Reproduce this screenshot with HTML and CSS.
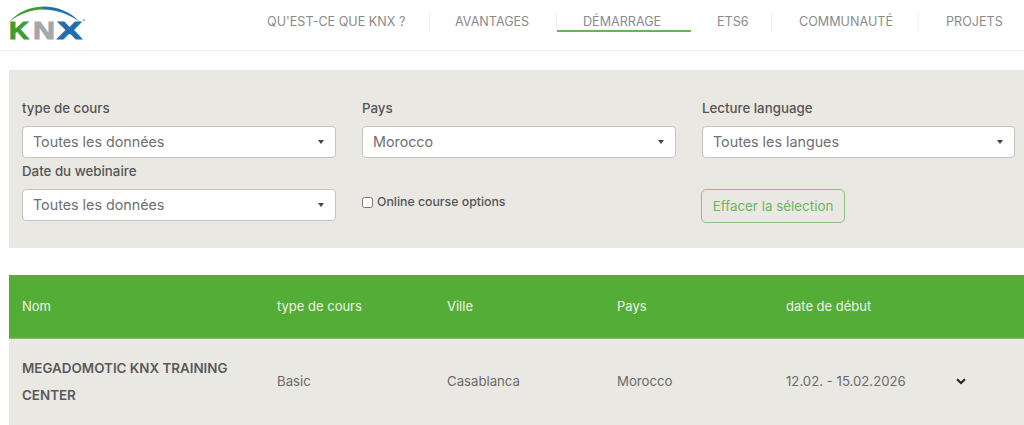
FILE: index.html
```html
<!DOCTYPE html>
<html lang="fr">
<head>
  <meta charset="UTF-8">
  <meta name="viewport" content="width=device-width, initial-scale=1.0">
  <title>KNX - Démarrage</title>
  <link rel="stylesheet" href="styles.css">
</head>
<body>
  <header class="topbar">
    <a class="logo" href="#">
      <svg width="80" height="38" viewBox="0 0 80 38">
        <path d="M1 17 C10 7 21 2 35 1.500 L35 4.500 C22 5 11 9 1 17 Z" fill="#3f9c35"/>
        <path d="M35 1.500 C50 1.500 63 7 73 18 C62 9 49 5 35 4.500 Z" fill="#1f6fae"/>
        <text class="logo-k" x="1" y="34" textLength="20" lengthAdjust="spacingAndGlyphs">K</text>
        <text class="logo-n" x="25" y="34" textLength="22" lengthAdjust="spacingAndGlyphs">N</text>
        <text class="logo-x" x="49" y="34" textLength="25" lengthAdjust="spacingAndGlyphs">X</text>
        <circle cx="76" cy="15" r="1.200" fill="#b5bcc2"/>
      </svg>
    </a>
    <nav class="menu">
      <a class="menu-item item-1" href="#">QU'EST-CE QUE KNX ?</a>
      <a class="menu-item item-2" href="#">AVANTAGES</a>
      <a class="menu-item item-3 active" href="#">DÉMARRAGE</a>
      <a class="menu-item item-4" href="#">ETS6</a>
      <a class="menu-item item-5" href="#">COMMUNAUTÉ</a>
      <a class="menu-item item-6" href="#">PROJETS</a>
    </nav>
  </header>

  <section class="filters">
    <div class="field">
      <label>type de cours</label>
      <div class="select">Toutes les données<span class="caret"></span></div>
    </div>
    <div class="field">
      <label>Pays</label>
      <div class="select">Morocco<span class="caret"></span></div>
    </div>
    <div class="field">
      <label>Lecture language</label>
      <div class="select">Toutes les langues<span class="caret"></span></div>
    </div>
    <div class="field">
      <label>Date du webinaire</label>
      <div class="select">Toutes les données<span class="caret"></span></div>
    </div>
    <div class="field field-check">
      <label class="check"><input type="checkbox">Online course options</label>
    </div>
    <div class="field field-btn">
      <button class="clear">Effacer la sélection</button>
    </div>
  </section>

  <section class="courses">
    <div class="row head">
      <div>Nom</div>
      <div>type de cours</div>
      <div>Ville</div>
      <div>Pays</div>
      <div>date de début</div>
      <div></div>
    </div>
    <div class="row body-row">
      <div class="name">MEGADOMOTIC KNX TRAINING CENTER</div>
      <div>Basic</div>
      <div>Casablanca</div>
      <div>Morocco</div>
      <div>12.02. - 15.02.2026</div>
      <div class="toggle">
        <svg width="10" height="7" viewBox="0 0 10 7"><path d="M1 1.200 L5 5 L9 1.200" fill="none" stroke="#222" stroke-width="2"/></svg>
      </div>
    </div>
  </section>
</body>
</html>
```

FILE: styles.css
```css
html, body {
  margin: 0;
  height: 425px;
  overflow: hidden;
  background: white;
}
body {
  font-family: Inter, "Open Sans", sans-serif;
  color: #555;
}
a { text-decoration: none; color: inherit; }

.topbar {
  display: flex;
  justify-content: space-between;
  height: 50px;
  border-bottom: 1px solid #eeeeee;
}
.logo { padding: 5px 0 0 8px; }
.logo svg { display: block; overflow: visible; }
.logo text {
  font-family: "Liberation Sans", sans-serif;
  font-weight: bold;
  font-size: 24px;
  stroke-width: 0.9px;
}
.logo-k { fill: #3f9c35; stroke: #3f9c35; }
.logo-n { fill: #a3a8ab; stroke: #a3a8ab; }
.logo-x { fill: #1f6fae; stroke: #1f6fae; }

.menu { display: flex; align-items: flex-start; padding-top: 12px; }
.menu-item {
  box-sizing: border-box;
  height: 20px;
  line-height: 20px;
  padding-left: 26px;
  font-size: 12.6px;
  color: #8a8a8a;
  white-space: nowrap;
  border-right: 1px solid #eeeeee;
}
.item-1 { width: 189px; }
.item-2 { width: 127px; padding-left: 25px; }
.item-3 { width: 134px; }
.item-4 { width: 81px; }
.item-5 { width: 147px; padding-left: 27px; }
.item-6 { width: 105px; padding-left: 27px; border-right: none; }
.menu-item.active { border-right: none; border-bottom: 2px solid #68b25a; }

.filters {
  display: grid;
  grid-template-columns: 314px 314px 313px;
  column-gap: 26px;
  grid-auto-rows: 63px;
  margin: 19px 0 0 9px;
  height: 178px;
  box-sizing: border-box;
  padding: 29px 0 0 13px;
  background: #eae8e3;
}
.field label {
  display: block;
  font-size: 13.3px;
  font-weight: 500;
  line-height: 18px;
  margin-bottom: 9px;
  color: #555;
}
.select {
  position: relative;
  box-sizing: border-box;
  height: 32px;
  line-height: 30px;
  padding-left: 10px;
  font-size: 14.3px;
  color: #707070;
  background: white;
  border: 1px solid #c4c4c0;
  border-radius: 4px;
}
.caret {
  position: absolute;
  right: 11px;
  top: 13px;
  border-left: 3.5px solid transparent;
  border-right: 3.5px solid transparent;
  border-top: 4px solid #444;
}

.field-check { padding-top: 31px; }
.field-check .check {
  display: flex;
  align-items: center;
  font-size: 12.3px;
  margin: 0;
}
.check input {
  width: 11px;
  height: 11px;
  margin: 1px 4px 0 0;
}
.field-btn { padding-top: 27px; }
.clear {
  height: 34px;
  width: 144px;
  margin-left: -1px;
  padding: 0;
  font-family: inherit;
  font-size: 13.4px;
  color: #6cb45f;
  background: transparent;
  border: 1px solid #8fc284;
  border-radius: 5px;
}

.courses { margin: 27px 0 0 9px; }
.row {
  display: grid;
  grid-template-columns: 255px 170px 170px 169px 170px 1fr;
  align-items: center;
  padding-left: 13px;
  padding-bottom: 2px;
  font-size: 13.2px;
}
.head {
  height: 61px;
  background: #54ad36;
  color: #ecf6e8;
  border-bottom: 1px solid #8fb585;
  font-size: 13px;
}
.body-row {
  height: 84px;
  background: #eae8e3;
  color: #6a6a6a;
}
.name {
  padding-top: 2px;
  font-size: 13.4px;
  font-weight: 600;
  color: #5a5a5a;
  line-height: 27px;
  padding-right: 20px;
}
.toggle { line-height: 0; }
```
